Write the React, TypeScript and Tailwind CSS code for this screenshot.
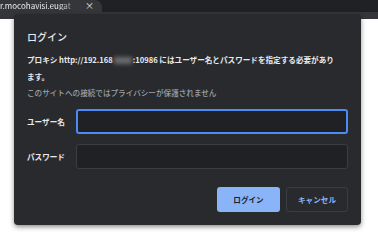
export default function App() {
  const font = { fontFamily: '"Noto Sans CJK JP", "Noto Sans", sans-serif' };
  return (
    <div className="relative w-[378px] h-[241px] overflow-hidden bg-white" style={font}>
      {/* browser tab strip */}
      <div className="h-[12px] bg-[#202124] flex">
        <div className="w-[102px] h-full bg-[#35363a] rounded-tr-[7px] flex items-start pt-[1px] overflow-hidden">
          <span className="block w-[80px] text-[8px] leading-[9px] text-[#e8eaed] whitespace-nowrap [mask-image:linear-gradient(to_right,black_75%,transparent)]">
            r.mocohavisi.eugat
          </span>
          <span className="block ml-[5px] text-[9px] leading-[9px] text-[#e8eaed]">×</span>
        </div>
      </div>
      <div className="h-[7px] bg-[#35363a]" />

      {/* auth dialog (modal overlay) */}
      <div className="absolute left-[14px] top-[14px] w-[347px] h-[211px] bg-[#292a2d] rounded-[4px] shadow-[0_2px_5px_rgba(0,0,0,0.45)] flex flex-col px-[13px] pt-[17px]">
        <div className="text-[10px] leading-[12px] text-[#e8eaed] font-medium">ログイン</div>
        <div className="mt-[8px] text-[7.6px] leading-[17px] text-[#e8eaed] font-semibold whitespace-nowrap">
          プロキシ http://192.168
          <span className="inline-block w-[18px] h-[7px] mx-[1px] bg-[#6b6d71] blur-[2px] align-middle" />
          :10986 にはユーザー名とパスワードを指定する必要があり
          <br />
          ます。
        </div>
        <div className="text-[7.6px] leading-[15px] text-[#9aa0a6] font-medium">
          このサイトへの接続ではプライバシーが保護されません
        </div>

        <div className="mt-[9px] flex items-center">
          <div className="w-[49px] text-[7.6px] text-[#e8eaed] font-semibold">ユーザー名</div>
          <div className="flex-1 h-[25px] rounded-[3px] border-2 border-[#4a8bf5] bg-[#202124]" />
        </div>
        <div className="mt-[10px] flex items-center">
          <div className="w-[49px] text-[7.6px] text-[#e8eaed] font-semibold">パスワード</div>
          <div className="flex-1 h-[25px] rounded-[3px] border border-[#3c3d41] bg-[#202124]" />
        </div>

        <div className="mt-[18px] flex justify-end gap-[6px]">
          <button className="w-[63px] h-[25px] rounded-[3px] bg-[#8ab4f8] text-[#202124] text-[7.6px] font-bold">
            ログイン
          </button>
          <button className="w-[62px] h-[25px] rounded-[3px] border border-[#3c3d41] bg-[#292a2d] text-[#8ab4f8] text-[7.6px] font-bold">
            キャンセル
          </button>
        </div>
      </div>
    </div>
  );
}
